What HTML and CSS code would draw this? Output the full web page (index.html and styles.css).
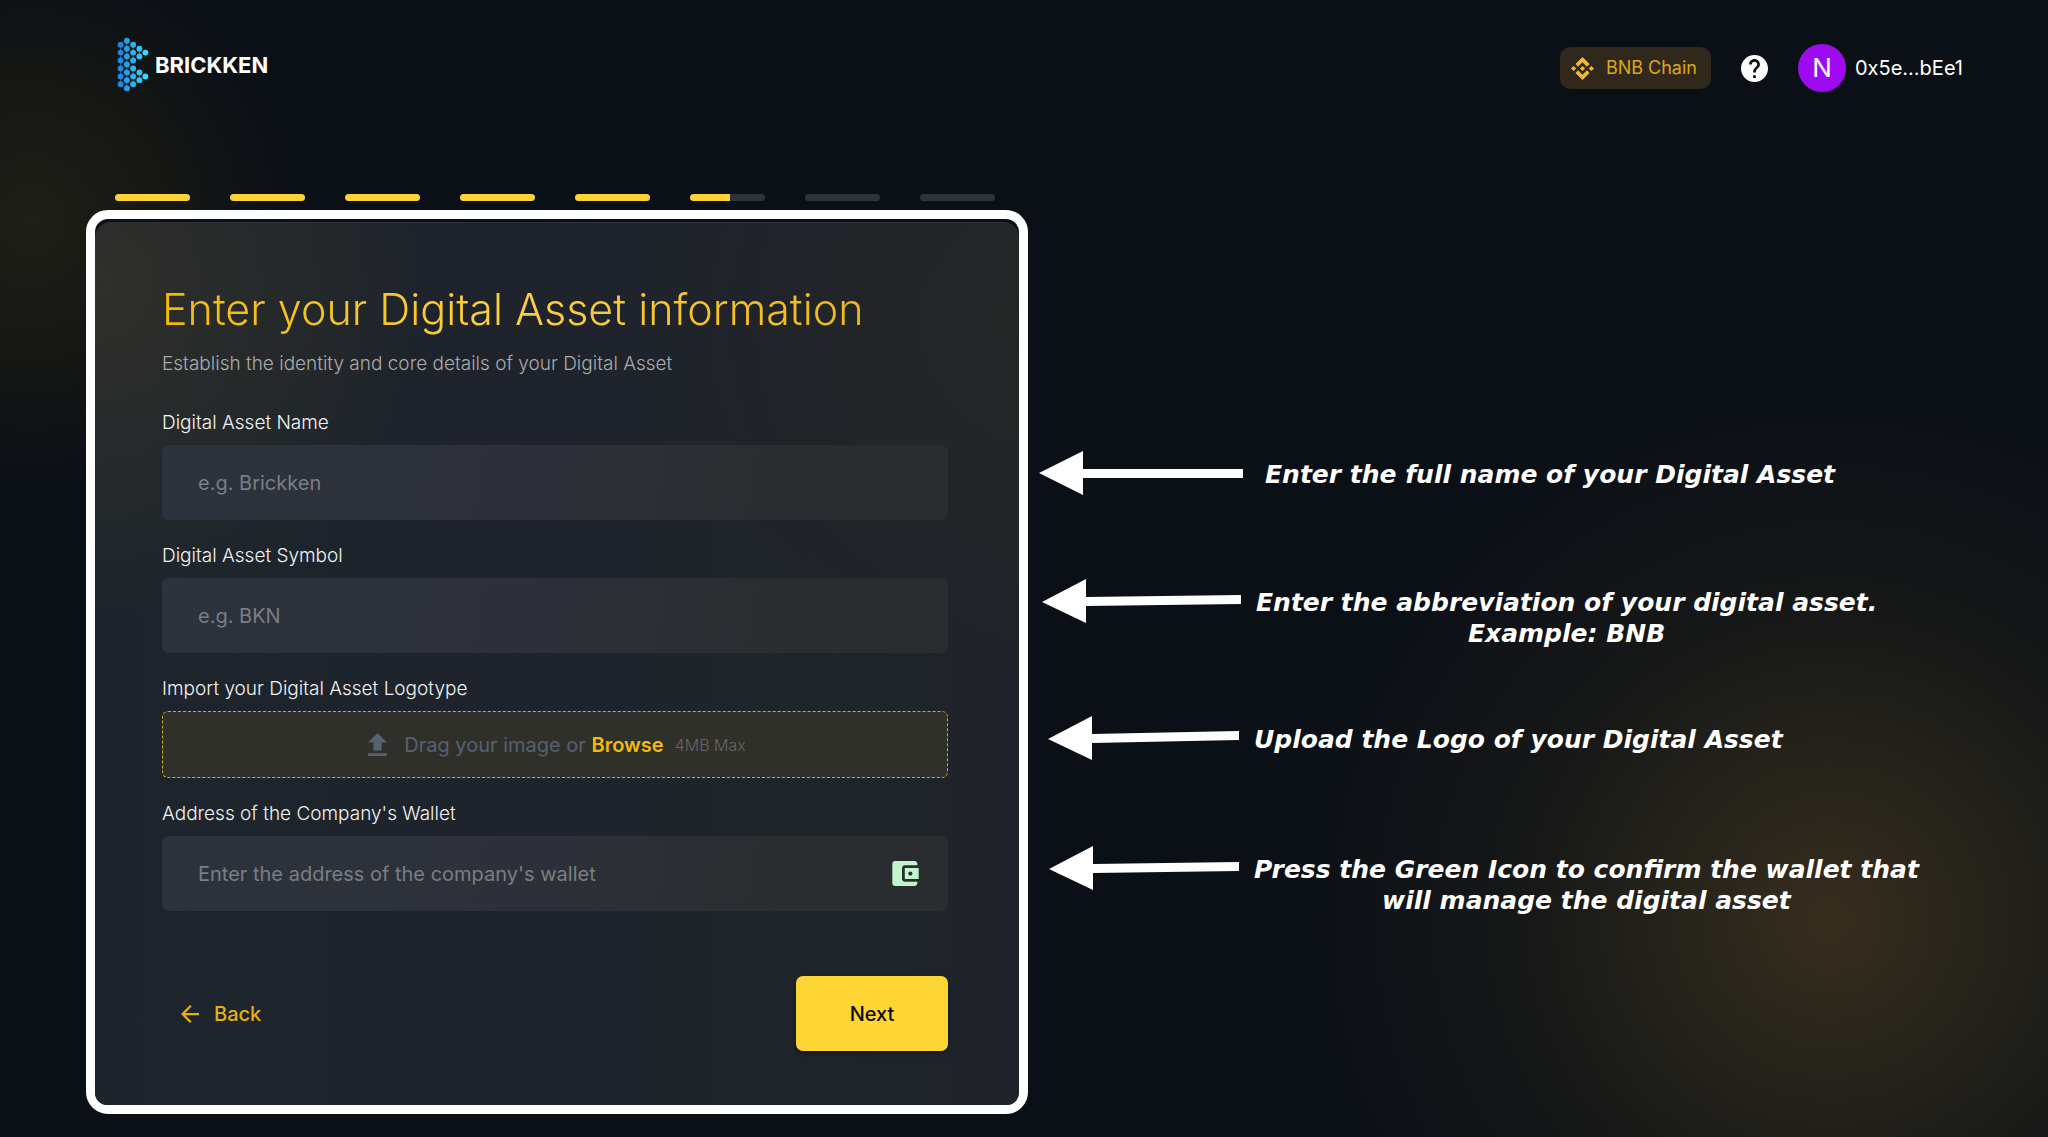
FILE: index.html
```html
<!DOCTYPE html>
<html lang="en">
<head>
<meta charset="utf-8">
<meta name="viewport" content="width=device-width, initial-scale=1">
<title>Brickken – Digital Asset information</title>
<link rel="stylesheet" href="styles.css">
</head>
<body class="page">
<header class="topbar">
  <a class="brand" href="#">
    <svg class="brand-mark" viewBox="52 51 97 166" aria-hidden="true">
      <g stroke="#1d6fb0" stroke-width="3"><path d="M63 74V194M82 62V206M101 74V122M101 146V194M120 86V110M120 158V182"/></g>
      <g fill="#2287dc"><circle cx="63" cy="74" r="9"/><circle cx="63" cy="98" r="9"/><circle cx="63" cy="122" r="9"/><circle cx="63" cy="146" r="9"/><circle cx="63" cy="170" r="9"/><circle cx="63" cy="194" r="9"/></g>
      <g fill="#279fe5"><circle cx="82" cy="62" r="9"/><circle cx="82" cy="86" r="9"/><circle cx="82" cy="110" r="9"/><circle cx="82" cy="134" r="9"/><circle cx="82" cy="158" r="9"/><circle cx="82" cy="182" r="9"/><circle cx="82" cy="206" r="9"/></g>
      <g fill="#2ab4ee"><circle cx="101" cy="74" r="9"/><circle cx="101" cy="98" r="9"/><circle cx="101" cy="122" r="9"/><circle cx="101" cy="146" r="9"/><circle cx="101" cy="170" r="9"/><circle cx="101" cy="194" r="9"/></g>
      <g fill="#2cc6f6"><circle cx="120" cy="86" r="9"/><circle cx="120" cy="110" r="9"/><circle cx="120" cy="158" r="9"/><circle cx="120" cy="182" r="9"/></g>
      <g fill="#35dcfd"><circle cx="138" cy="98" r="9"/><circle cx="138" cy="170" r="9"/></g>
    </svg>
    <span class="brand-name">BRICKKEN</span>
  </a>
  <nav class="account">
    <button class="chain" type="button">
      <svg class="chain-icon" viewBox="0 0 24 24" aria-hidden="true"><path fill="currentColor" d="M16.624 13.9202l2.7175 2.7154-7.353 7.353-7.353-7.352 2.7175-2.7164 4.6355 4.6595 4.6356-4.6595zm4.6366-4.6366L24 12l-2.7154 2.7164L18.5682 12l2.6924-2.7164zm-9.272.001l2.7163 2.6914-2.7164 2.7174v-.001L9.2721 12l2.7164-2.7154zm-9.2722-.001L5.4088 12l-2.6914 2.6924L0 12l2.7164-2.7164zM11.9885.0115l7.353 7.329-2.7174 2.7154-4.6356-4.6356-4.6355 4.6595-2.7174-2.7154 7.353-7.353z"/></svg>
      <span>BNB Chain</span>
    </button>
    <button class="help" type="button" aria-label="Help">
      <svg class="help-icon" viewBox="2 2 20 20" aria-hidden="true"><path fill="currentColor" d="M12 2C6.48 2 2 6.48 2 12s4.48 10 10 10 10-4.480 10-10S17.520 2 12 2zm1 17h-2v-2h2v2zm2.070-7.750l-.9.92C13.450 12.900 13 13.500 13 15h-2v-.5c0-1.100.450-2.100 1.170-2.830l1.240-1.260c.370-.360.590-.860.590-1.410 0-1.100-.9-2-2-2s-2 .9-2 2H8c0-2.210 1.790-4 4-4s4 1.790 4 4c0 .880-.360 1.680-.930 2.250z"/></svg>
    </button>
    <button class="wallet" type="button">
      <span class="avatar">N</span>
      <span>0x5e...bEe1</span>
    </button>
  </nav>
</header>

<main class="layout">
  <section class="wizard">
    <ol class="steps" aria-label="Progress">
      <li class="step step-done"></li>
      <li class="step step-done"></li>
      <li class="step step-done"></li>
      <li class="step step-done"></li>
      <li class="step step-done"></li>
      <li class="step step-current"></li>
      <li class="step"></li>
      <li class="step"></li>
    </ol>
    <div class="frame">
      <form class="card">
        <h1 class="title">Enter your Digital Asset information</h1>
        <p class="subtitle">Establish the identity and core details of your Digital Asset</p>
        <div class="fields">
          <div class="field">
            <label class="label" for="asset-name">Digital Asset Name</label>
            <input class="input" id="asset-name" type="text" placeholder="e.g. Brickken">
          </div>
          <div class="field">
            <label class="label" for="asset-symbol">Digital Asset Symbol</label>
            <input class="input" id="asset-symbol" type="text" placeholder="e.g. BKN">
          </div>
          <div class="field">
            <label class="label" for="asset-logo">Import your Digital Asset Logotype</label>
            <label class="dropzone">
              <input class="file" id="asset-logo" type="file" accept="image/*">
              <svg class="upload-icon" viewBox="5 3 14 17" aria-hidden="true"><path fill="currentColor" d="M5 20h14v-2H5zM5 10h4v6h6v-6h4l-7-7z"/></svg>
              <span>Drag your image or <span class="browse">Browse</span></span>
              <span class="limit">4MB Max</span>
            </label>
          </div>
          <div class="field">
            <label class="label" for="wallet-address">Address of the Company's Wallet</label>
            <div class="input-group">
              <input class="input-bare" id="wallet-address" type="text" placeholder="Enter the address of the company's wallet">
              <button class="use-wallet" type="button" aria-label="Use connected wallet">
                <svg class="wallet-icon" viewBox="3 3 19 18" aria-hidden="true"><path fill="currentColor" d="M21 18v1c0 1.100-.9 2-2 2H5c-1.110 0-2-.9-2-2V5c0-1.100.890-2 2-2h14c1.100 0 2 .9 2 2v1h-9c-1.110 0-2 .9-2 2v8c0 1.100.890 2 2 2h9zm-9-2h10V8H12v8zm4-2.500c-.830 0-1.500-.670-1.500-1.500s.670-1.500 1.500-1.500 1.500.670 1.500 1.500-.670 1.500-1.500 1.500z"/></svg>
              </button>
            </div>
          </div>
        </div>
        <div class="actions">
          <button class="back" type="button">
            <svg class="back-icon" viewBox="4 4 16 16" aria-hidden="true"><path fill="currentColor" d="M20 11H7.830l5.590-5.590L12 4l-8 8 8 8 1.410-1.410L7.830 13H20z"/></svg>
            <span>Back</span>
          </button>
          <button class="next" type="submit">Next</button>
        </div>
      </form>
    </div>
  </section>

  <aside class="notes">
    <div class="note note-wide">
      <svg class="arrow" viewBox="0 0 204 44" width="204" aria-hidden="true"><path fill="#fff" d="M0 22L44 0V18H204V27H44V44z"/></svg>
      <p class="note-text">Enter the full name of your Digital Asset</p>
    </div>
    <div class="note">
      <svg class="arrow" viewBox="-3 0 202 44" width="202" aria-hidden="true"><path fill="#fff" d="M0 23L44 0V18L199 16V25L44 27V44z"/></svg>
      <p class="note-text">Enter the abbreviation of your digital asset.<br>Example: BNB</p>
    </div>
    <div class="note">
      <svg class="arrow" viewBox="-9 0 200 44" width="200" aria-hidden="true"><path fill="#fff" d="M0 23L44 0V18L191 15V24L44 27V44z"/></svg>
      <p class="note-text">Upload the Logo of your Digital Asset</p>
    </div>
    <div class="note">
      <svg class="arrow" viewBox="-10 0 200 44" width="200" aria-hidden="true"><path fill="#fff" d="M0 23L44 0V18L190 16V25L44 27V44z"/></svg>
      <p class="note-text">Press the Green Icon to confirm the wallet that<br>will manage the digital asset</p>
    </div>
  </aside>
</main>
</body>
</html>
```
FILE: styles.css
```css
* { box-sizing: border-box; }

.page {
  margin: 0;
  min-height: 100vh;
  border-bottom: 1px solid #2e2e36;
  background:
    radial-gradient(circle 540px at 1830px 920px, #372d1e 0, #27241b 27%, #171817 56%, rgba(11, 16, 23, 0) 100%),
    radial-gradient(circle 270px at 30px 220px, #1f1e18 0, #171814 45%, rgba(11, 16, 23, 0) 100%),
    #0b1017;
  color: #fff;
  font: 400 20px/26px Inter, "Liberation Sans", sans-serif;
}

button {
  padding: 0;
  border: 0;
  background: none;
  color: inherit;
  font: inherit;
  cursor: pointer;
}

/* Top bar */
.topbar {
  display: flex;
  align-items: flex-end;
  justify-content: space-between;
  padding: 37px 85px 0 117px;
}
.brand { display: flex; align-items: center; gap: 6px; color: #fff; text-decoration: none; }
.brand-mark { display: block; width: 32px; height: 55px; }
.brand-name { font-weight: 700; font-size: 22px; }
.account { display: flex; align-items: center; gap: 30px; }
.chain {
  display: flex;
  align-items: center;
  gap: 12px;
  height: 42px;
  padding: 0 14px 0 11px;
  border-radius: 10px;
  background: #30291b;
  color: #dca813;
  font-size: 18px;
}
.chain-icon { width: 23px; height: 23px; color: #f3ba2f; }
.help-icon { display: block; width: 27px; height: 27px; }
.wallet { display: flex; align-items: center; gap: 9px; }
.avatar {
  display: grid;
  place-items: center;
  width: 48px;
  height: 48px;
  border-radius: 50%;
  background: #9f0bf0;
  font-size: 26px;
}

/* Page columns */
.layout {
  display: grid;
  grid-template-columns: minmax(0, 942fr) minmax(0, 1009fr);
  column-gap: 11px;
  padding: 102px 0 23px 86px;
}

/* Step progress */
.steps {
  display: flex;
  gap: 40px;
  margin: 0 0 9px;
  padding: 0 33px 0 29px;
  list-style: none;
}
.step { flex: 1; height: 7px; border-radius: 4px; background: #2e323b; }
.step-done { background: #fdd235; }
.step-current { background: linear-gradient(90deg, #fdd235 54%, #2e323b 54%); }

/* Form card */
.frame {
  padding-top: 3px;
  border: 9px solid #fff;
  border-radius: 22px;
  background: #0b1017;
}
.card {
  padding: 56px 71px 54px 67px;
  border-top: 1px solid #2a3238;
  border-radius: 16px 16px 12px 12px;
  background:
    radial-gradient(circle 330px at 0 60px, rgba(52, 50, 42, .8), rgba(52, 50, 42, 0)),
    radial-gradient(circle 340px at 100% 100px, rgba(36, 40, 38, .8), rgba(36, 40, 38, 0)),
    linear-gradient(90deg, #1d252c, #1f232b 60%, #20242a);
}
.title {
  width: max-content;
  margin: 0;
  background: linear-gradient(90deg, #f0b90b, #fdd03f 50%, #f0b81a);
  background-clip: text;
  -webkit-background-clip: text;
  color: transparent;
  font-weight: 300;
  font-size: 43px;
  line-height: 60px;
}
.subtitle { margin: 12px 0 33px; color: #a9abae; font-weight: 300; font-size: 19px; }
.fields { display: grid; gap: 23px; }
.field { display: grid; gap: 9px; }
.label { color: #f1f2f2; font-size: 19px; font-weight: 300; }
.input,
.input-group {
  width: 100%;
  height: 75px;
  border: 0;
  border-radius: 7px;
  background: linear-gradient(100deg, #2c333c, #2d3039 45%, #2a2d2f 80%);
}
.input { padding: 0 36px; }
.input,
.input-bare { color: #fff; font: inherit; }
.input-group { display: flex; align-items: center; padding: 0 29px 0 36px; }
.input-bare { flex: 1; padding: 0; border: 0; background: none; }
.input::placeholder,
.input-bare::placeholder { color: #7b7e83; opacity: 1; }
.use-wallet { color: #c3f5cd; }
.wallet-icon { display: block; width: 27px; height: 25px; }
.dropzone {
  display: flex;
  align-items: center;
  justify-content: center;
  gap: 11px;
  height: 67px;
  padding-left: 4px;
  border: 1px dashed #dca81c;
  border-radius: 6px;
  background: #30302b;
  color: #566173;
  cursor: pointer;
}
.file { position: absolute; width: 1px; height: 1px; opacity: 0; }
.upload-icon { width: 19px; height: 23px; margin-right: 6px; }
.browse { color: #f2bb0c; font-weight: 600; }
.limit { color: #666663; font-weight: 300; font-size: 16px; }
.actions {
  display: flex;
  align-items: center;
  justify-content: space-between;
  margin-top: 65px;
  padding-left: 19px;
}
.back { display: flex; align-items: center; gap: 15px; color: #e6af12; font-weight: 500; }
.back-icon { width: 18px; height: 18px; }
.next {
  width: 152px;
  height: 75px;
  border-radius: 7px;
  background: #fdd535;
  box-shadow: 0 2px 4px rgba(0, 0, 0, .4);
  color: #0b0b0b;
  font-weight: 500;
}

/* Explanations beside the form */
.notes {
  display: grid;
  grid-template-rows: 128px 137px 130px auto;
  align-content: start;
  padding-top: 257px;
}
.note { display: flex; align-items: flex-start; gap: 15px; }
.note-wide { gap: 22px; }
.arrow { flex: none; height: 44px; }
.note-text {
  margin: 0;
  padding-top: 8px;
  font: italic 700 25px/31px Verdana, "DejaVu Sans", sans-serif;
  text-align: center;
}
```
